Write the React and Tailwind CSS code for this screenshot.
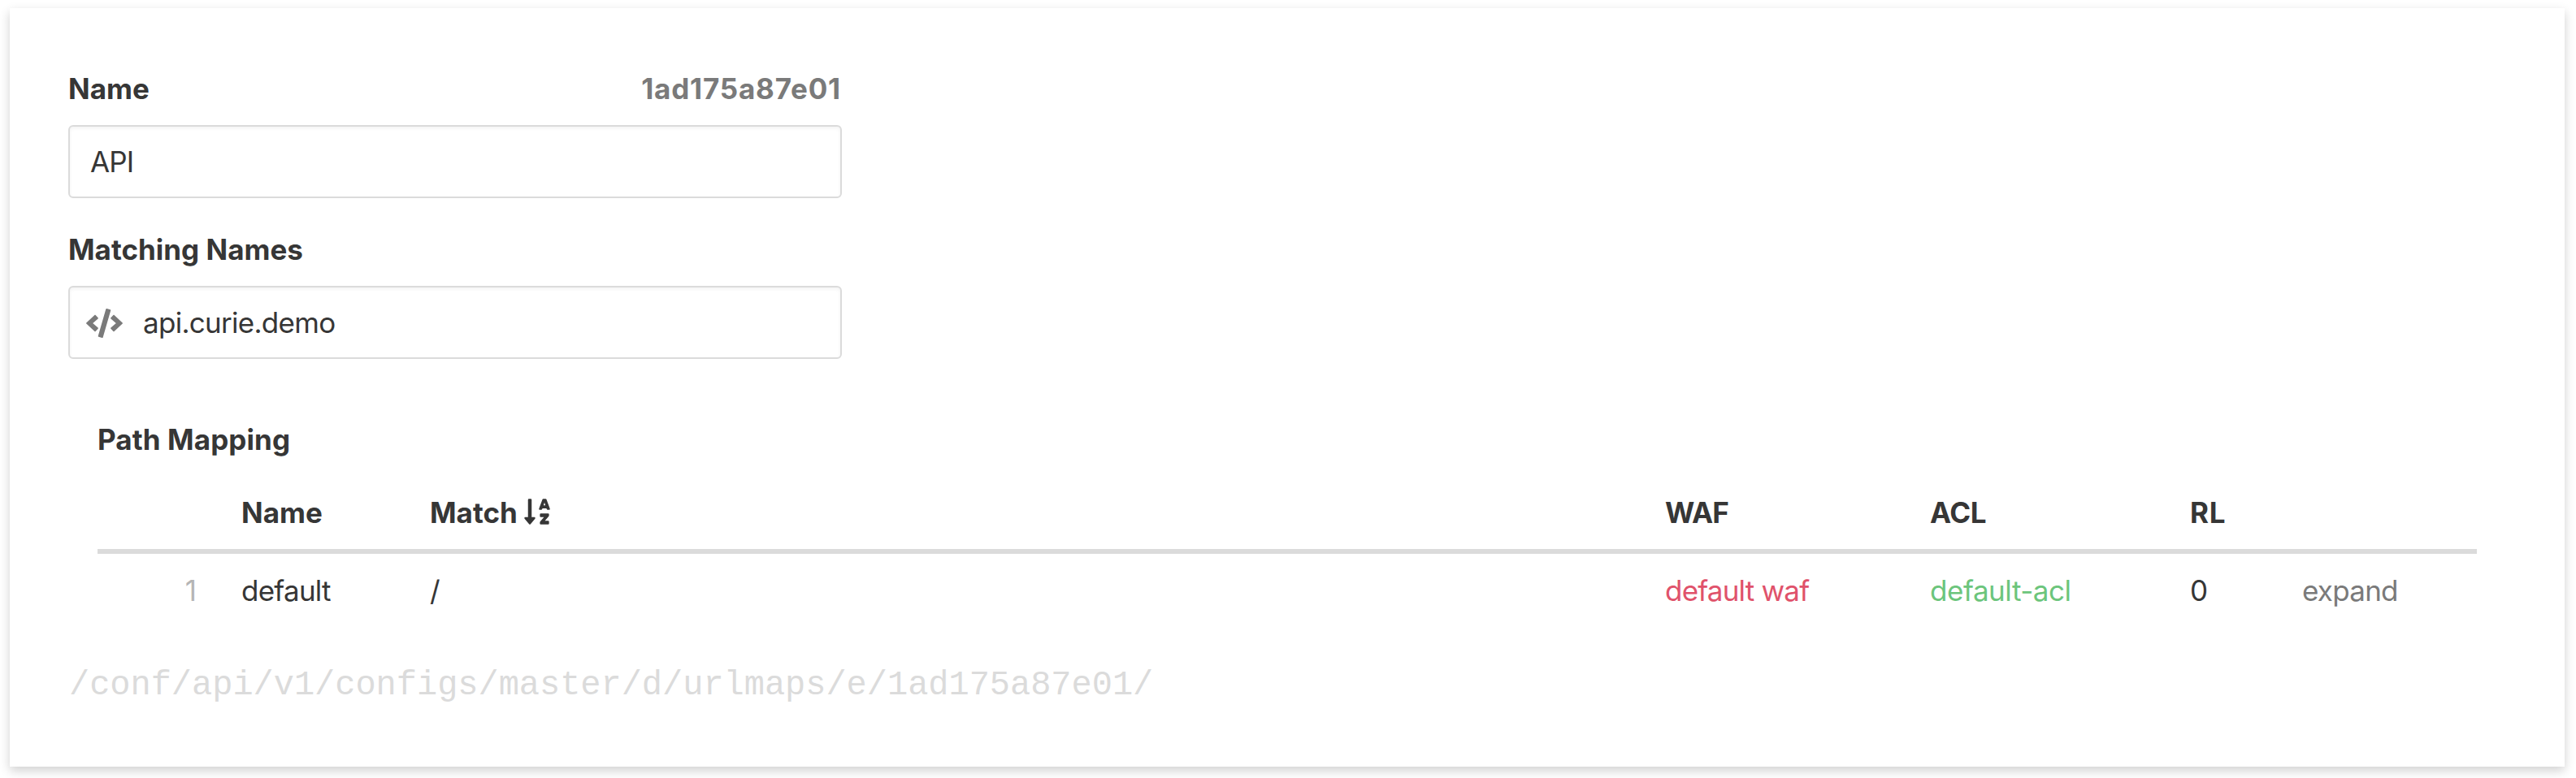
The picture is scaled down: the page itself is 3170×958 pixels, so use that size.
import React from "react";
import { FaCode, FaSortAlphaDown } from "react-icons/fa";

function Field({ label, aside, children }) {
  return (
    <div className="flex flex-col gap-[18px]">
      <div className="flex justify-between font-bold leading-[54px]">
        <label>{label}</label>
        {aside}
      </div>
      <div className="flex h-[90px] items-center rounded-[6px] border-2 border-[#dbdbdb] bg-white shadow-[inset_0_2px_4px_rgba(10,10,10,0.05)]">
        {children}
      </div>
    </div>
  );
}

function HeadCell({ className = "", children }) {
  return (
    <th className={`border-b-[6px] border-[#dbdbdb] pb-[18px] pl-[27px] pr-0 pt-9 font-bold ${className}`}>
      {children}
    </th>
  );
}

export default function App() {
  return (
    <div className="h-[958px] w-[3170px] overflow-hidden bg-white pl-3 pt-2.5 font-['Inter',sans-serif] text-[35px] leading-[54px] text-[#363636]">
      <main className="h-[934px] w-[3144px] bg-white px-[72px] pt-[72px] shadow-[0_5px_12px_rgba(10,10,10,0.19)]">
        <div className="flex w-[952px] flex-col gap-9">
          <Field label="Name" aside={<span className="pr-px tracking-[0.8px] text-[#7a7a7a]">1ad175a87e01</span>}>
            <span className="pl-[25px] tracking-[-0.9px]">API</span>
          </Field>
          <Field label="Matching Names">
            <FaCode className="ml-5 mt-0.5 h-9 w-[45px] text-[#7a7a7a]" />
            <span className="ml-[25px] tracking-[-0.72px]">api.curie.demo</span>
          </Field>
        </div>

        <section className="ml-9 mt-[72px] w-[2928px]">
          <h2 className="font-bold tracking-[0.1px]">Path Mapping</h2>
          <table className="w-full table-fixed border-separate border-spacing-0 text-left">
            <colgroup>
              <col className="w-[150px]" />
              <col className="w-[232px]" />
              <col className="w-[1520px]" />
              <col className="w-[326px]" />
              <col className="w-[320px]" />
              <col className="w-[138px]" />
              <col />
            </colgroup>
            <thead>
              <tr>
                <HeadCell />
                <HeadCell>Name</HeadCell>
                <HeadCell>
                  <span className="flex items-center gap-1.5">
                    Match
                    <FaSortAlphaDown className="mb-0.5 h-9 w-[36px]" />
                  </span>
                </HeadCell>
                <HeadCell className="tracking-[-0.9px]">WAF</HeadCell>
                <HeadCell className="tracking-[-0.4px]">ACL</HeadCell>
                <HeadCell className="tracking-[0.8px]">RL</HeadCell>
                <HeadCell />
              </tr>
            </thead>
            <tbody>
              <tr>
                <td className="py-[18px] pr-[28px] text-right text-[#b5b5b5]">1</td>
                <td className="py-[18px] pl-[27px] tracking-[-0.75px]">default</td>
                <td className="py-[18px] pl-[27px]">/</td>
                <td className="py-[18px] pl-[27px] tracking-[-0.8px] text-[#e0526b]">default waf</td>
                <td className="py-[18px] pl-[27px] tracking-[-0.45px] text-[#6cc57c]">default-acl</td>
                <td className="py-[18px] pl-[27px]">0</td>
                <td className="py-[18px] pl-[27px] tracking-[-0.75px] text-[#7a7a7a]">expand</td>
              </tr>
            </tbody>
          </table>
        </section>

        <p className="mt-[41px] pl-px font-['Courier_New','Liberation_Mono',monospace] text-[42px] leading-[63px] tracking-[-0.03px] text-[#dbdbdb]">
          /conf/api/v1/configs/master/d/urlmaps/e/1ad175a87e01/
        </p>
      </main>
    </div>
  );
}
